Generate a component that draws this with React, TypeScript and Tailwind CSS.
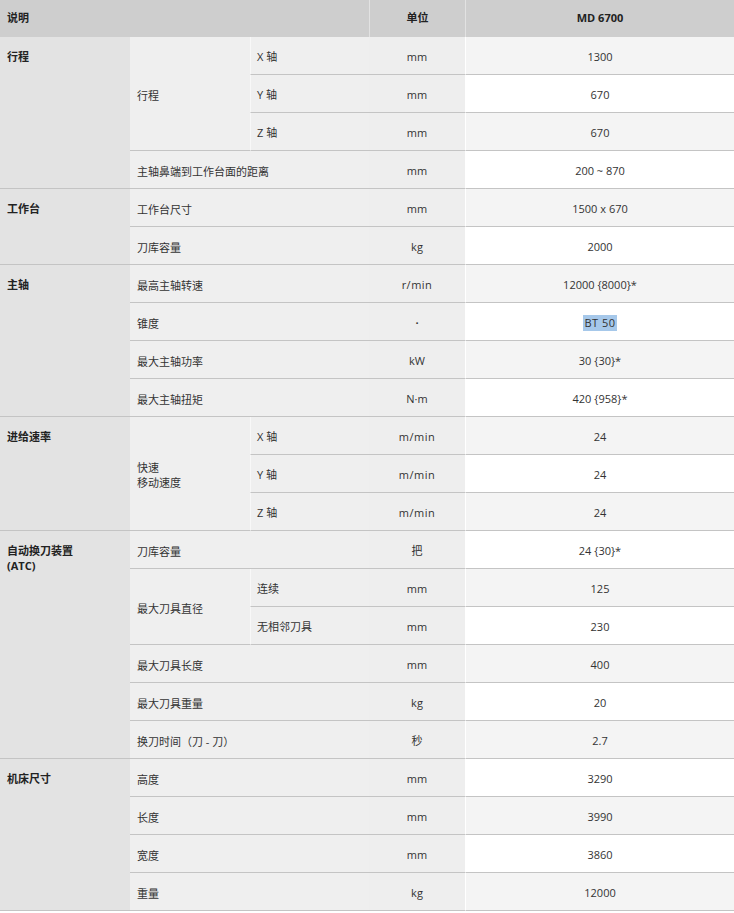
import type { ReactNode } from "react";

const font = { fontFamily: '"Open Sans", "Noto Sans CJK SC", sans-serif' };

function Group({ span, children }: { span: string; children: ReactNode }) {
  return (
    <div className={`${span} bg-[#e3e3e3] border-b border-[#c4c4c4] px-[7px] pt-[12px] font-bold leading-[15px] text-[#222]`}>
      {children}
    </div>
  );
}

function Label({ span, children }: { span: string; children: ReactNode }) {
  return (
    <div className={`${span} flex items-center bg-[#efefef] border-b border-[#c4c4c4] px-[7px] pt-[3px] leading-[15px]`}>
      {children}
    </div>
  );
}

function Sub({ children }: { children: ReactNode }) {
  return (
    <div className="flex items-center bg-[#efefef] border-b border-l border-[#c4c4c4] border-l-[#f8f8f8] px-[6px] pt-[3px]">
      {children}
    </div>
  );
}

function Unit({ children, mono }: { children: ReactNode; mono?: boolean }) {
  return (
    <div
      className={`flex items-center justify-center bg-[#eeeeee] border-b border-[#c4c4c4] pt-[3px] ${mono ? "tracking-[0.5px]" : ""}`}
    >
      {children}
    </div>
  );
}

function Val({ alt, children }: { alt?: boolean; children: ReactNode }) {
  return (
    <div
      className={`flex items-center justify-center border-b border-l border-[#c4c4c4] border-l-white pt-[3px] ${alt ? "bg-white" : "bg-[#f4f4f4]"}`}
    >
      {children}
    </div>
  );
}

export default function App() {
  return (
    <div className="w-[734px] h-[913px] bg-white text-[11px] text-[#333]" style={font}>
      <div className="grid grid-cols-[130px_120px_119px_96px_269px] grid-rows-[37px_repeat(23,38px)]">
        {/* header */}
        <div className="col-span-3 flex items-center bg-[#cecece] px-[7px] font-bold text-[#222]">说明</div>
        <div className="flex items-center justify-center bg-[#cecece] border-l border-[#e2e2e2] font-bold text-[#222]">单位</div>
        <div className="flex items-center justify-center bg-[#cecece] border-l border-[#e2e2e2] font-bold text-[#222]">MD 6700</div>

        {/* 行程 */}
        <Group span="row-span-4">行程</Group>
        <Label span="row-span-3">行程</Label>
        <Sub>X 轴</Sub>
        <Unit>mm</Unit>
        <Val>1300</Val>
        <Sub>Y 轴</Sub>
        <Unit>mm</Unit>
        <Val alt>670</Val>
        <Sub>Z 轴</Sub>
        <Unit>mm</Unit>
        <Val>670</Val>
        <Label span="col-span-2">主轴鼻端到工作台面的距离</Label>
        <Unit>mm</Unit>
        <Val alt>200 ~ 870</Val>

        {/* 工作台 */}
        <Group span="row-span-2">工作台</Group>
        <Label span="col-span-2">工作台尺寸</Label>
        <Unit>mm</Unit>
        <Val>1500 x 670</Val>
        <Label span="col-span-2">刀库容量</Label>
        <Unit>kg</Unit>
        <Val alt>2000</Val>

        {/* 主轴 */}
        <Group span="row-span-4">主轴</Group>
        <Label span="col-span-2">最高主轴转速</Label>
        <Unit mono>r/min</Unit>
        <Val>12000 {"{8000}"}*</Val>
        <Label span="col-span-2">锥度</Label>
        <Unit>
          <span className="font-bold">·</span>
        </Unit>
        <Val alt>
          <span className="bg-[#a6c8ea] px-[1px] tracking-[0.5px]">BT 50</span>
        </Val>
        <Label span="col-span-2">最大主轴功率</Label>
        <Unit>kW</Unit>
        <Val>30 {"{30}"}*</Val>
        <Label span="col-span-2">最大主轴扭矩</Label>
        <Unit>N·m</Unit>
        <Val alt>420 {"{958}"}*</Val>

        {/* 进给速率 */}
        <Group span="row-span-3">进给速率</Group>
        <Label span="row-span-3">
          <span>
            快速
            <br />
            移动速度
          </span>
        </Label>
        <Sub>X 轴</Sub>
        <Unit mono>m/min</Unit>
        <Val>24</Val>
        <Sub>Y 轴</Sub>
        <Unit mono>m/min</Unit>
        <Val alt>24</Val>
        <Sub>Z 轴</Sub>
        <Unit mono>m/min</Unit>
        <Val>24</Val>

        {/* ATC */}
        <Group span="row-span-6">
          自动换刀装置
          <br />
          (ATC)
        </Group>
        <Label span="col-span-2">刀库容量</Label>
        <Unit>把</Unit>
        <Val alt>24 {"{30}"}*</Val>
        <Label span="row-span-2">最大刀具直径</Label>
        <Sub>连续</Sub>
        <Unit>mm</Unit>
        <Val>125</Val>
        <Sub>无相邻刀具</Sub>
        <Unit>mm</Unit>
        <Val alt>230</Val>
        <Label span="col-span-2">最大刀具长度</Label>
        <Unit>mm</Unit>
        <Val>400</Val>
        <Label span="col-span-2">最大刀具重量</Label>
        <Unit>kg</Unit>
        <Val alt>20</Val>
        <Label span="col-span-2">换刀时间（刀 - 刀）</Label>
        <Unit>秒</Unit>
        <Val>2.7</Val>

        {/* 机床尺寸 */}
        <Group span="row-span-4">机床尺寸</Group>
        <Label span="col-span-2">高度</Label>
        <Unit>mm</Unit>
        <Val alt>3290</Val>
        <Label span="col-span-2">长度</Label>
        <Unit>mm</Unit>
        <Val>3990</Val>
        <Label span="col-span-2">宽度</Label>
        <Unit>mm</Unit>
        <Val alt>3860</Val>
        <Label span="col-span-2">重量</Label>
        <Unit>kg</Unit>
        <Val>12000</Val>
      </div>
    </div>
  );
}
